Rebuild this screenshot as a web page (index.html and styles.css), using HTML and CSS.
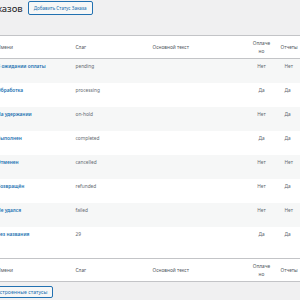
FILE: index.html
```html
<!DOCTYPE html>
<html>

<head>
  <meta http-equiv="Content-Type" content="text/html;charset=utf-8" />
  <title>Статусы заказов</title>
  <link rel="stylesheet" href="styles.css">
</head>

<body>
  <div class="wrap">

    <div class="title-bar">
      <h1 class="page-title">Статусы заказов</h1>
      <a class="title-action" href="#">Добавить Статус Заказа</a>
    </div>

    <table class="statuses">
      <thead>
        <tr>
          <th class="col-name">Имени</th>
          <th class="col-slug">Слаг</th>
          <th class="col-text">Основной текст</th>
          <th class="col-paid">Оплаче<wbr>но</th>
          <th class="col-reports">Отчеты</th>
        </tr>
      </thead>
      <tbody>
        <tr>
          <td class="col-name"><a href="#">В ожидании оплаты</a></td>
          <td class="col-slug">pending</td>
          <td class="col-text"></td>
          <td class="col-paid">Нет</td>
          <td class="col-reports">Нет</td>
        </tr>
        <tr>
          <td class="col-name"><a href="#">Обработка</a></td>
          <td class="col-slug">processing</td>
          <td class="col-text"></td>
          <td class="col-paid">Да</td>
          <td class="col-reports">Да</td>
        </tr>
        <tr>
          <td class="col-name"><a href="#">На удержании</a></td>
          <td class="col-slug">on-hold</td>
          <td class="col-text"></td>
          <td class="col-paid">Нет</td>
          <td class="col-reports">Да</td>
        </tr>
        <tr>
          <td class="col-name"><a href="#">Выполнен</a></td>
          <td class="col-slug">completed</td>
          <td class="col-text"></td>
          <td class="col-paid">Да</td>
          <td class="col-reports">Да</td>
        </tr>
        <tr>
          <td class="col-name"><a href="#">Отменен</a></td>
          <td class="col-slug">cancelled</td>
          <td class="col-text"></td>
          <td class="col-paid">Нет</td>
          <td class="col-reports">Нет</td>
        </tr>
        <tr>
          <td class="col-name"><a href="#">Возвращён</a></td>
          <td class="col-slug">refunded</td>
          <td class="col-text"></td>
          <td class="col-paid">Нет</td>
          <td class="col-reports">Да</td>
        </tr>
        <tr>
          <td class="col-name"><a href="#">Не удался</a></td>
          <td class="col-slug">failed</td>
          <td class="col-text"></td>
          <td class="col-paid">Нет</td>
          <td class="col-reports">Нет</td>
        </tr>
        <tr class="last">
          <td class="col-name"><a href="#">Без названия</a></td>
          <td class="col-slug">29</td>
          <td class="col-text"></td>
          <td class="col-paid">Да</td>
          <td class="col-reports">Да</td>
        </tr>
      </tbody>
      <tfoot>
        <tr>
          <th class="col-name">Имени</th>
          <th class="col-slug">Слаг</th>
          <th class="col-text">Основной текст</th>
          <th class="col-paid">Оплаче<wbr>но</th>
          <th class="col-reports">Отчеты</th>
        </tr>
      </tfoot>
    </table>

    <div class="bottom-bar">
      <a class="button" href="#">Настроенные статусы</a>
    </div>

  </div>
</body>

</html>
```

FILE: styles.css
```css
body {
  font-family: "Noto Sans", "Open Sans", sans-serif;
  font-size: 4.8px;
  background-color: #f0f0f1;
  color: #3c434a;
  margin: 0;
}

a {
  text-decoration: none;
  color: #2271b1;
}

.wrap {
  margin-left: -8px;
  width: 340px;
}

.title-bar {
  display: flex;
  align-items: center;
  gap: 5px;
  margin-left: -44px;
  padding-top: 1px;
  height: 14px;
}

.page-title {
  margin: 0;
  font-size: 9.5px;
  font-weight: 400;
  color: #1d2327;
}

.title-action {
  display: block;
  font-size: 4.6px;
  line-height: 12px;
  padding: 0 5px;
  border: 1px solid #2271b1;
  border-radius: 2px;
  background: #f6f7f7;
}

/* table */

.statuses {
  margin-top: 20px;
  width: 330px;
  table-layout: fixed;
  border-collapse: collapse;
  background: #fff;
  border: 1px solid #c3c4c7;
}

.statuses th,
.statuses td {
  box-sizing: border-box;
}

.statuses th {
  font-weight: 400;
  text-align: left;
  color: #50575e;
  line-height: 8px;
  height: 22px;
  padding: 3px 4px;
  vertical-align: middle;
}

.statuses thead tr {
  border-bottom: 1px solid #c3c4c7;
}

.statuses tfoot tr {
  border-top: 1px solid #c3c4c7;
}

.statuses td {
  line-height: 8px;
  padding: 3px 4px 13px;
  vertical-align: top;
  color: #646970;
}

.statuses tr.last td {
  padding-bottom: 20px;
}

.statuses tbody tr:nth-child(odd) {
  background: #f6f7f7;
}

.statuses td.col-name a {
  font-weight: 600;
}

.col-name {
  width: 79px;
}

.col-slug {
  width: 77px;
}

.col-text {
  width: 98px;
}

.col-paid {
  width: 30px;
  text-align: center !important;
}

.col-reports {
  width: 46px;
}

.statuses td.col-reports {
  padding-left: 8px;
}

/* bottom */

.bottom-bar {
  margin-top: 4px;
  margin-left: -4px;
}

.button {
  display: inline-block;
  font-size: 5.2px;
  line-height: 10px;
  padding: 0 4px;
  border: 1px solid #2271b1;
  border-radius: 2px;
  background: #f6f7f7;
}
```
